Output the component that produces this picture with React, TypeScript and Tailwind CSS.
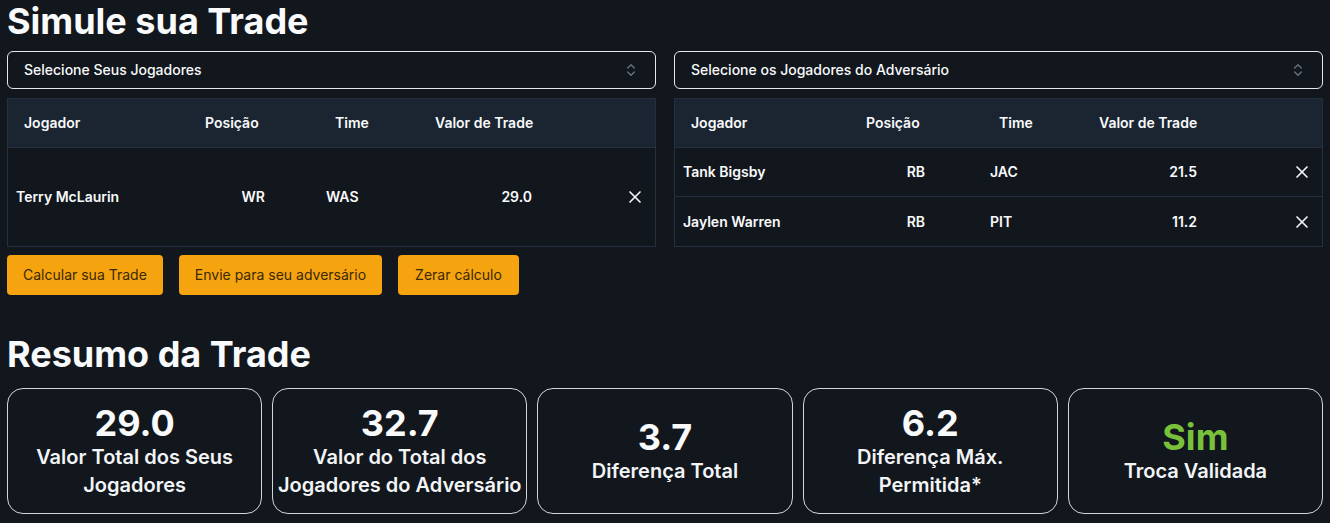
import { ChevronsUpDown, X } from "lucide-react";

type Player = {
  name: string;
  pos: string;
  team: string;
  value: string;
};

type TableCols = {
  grid: string;
  posHead: string;
  posBody: string;
  timeBody: string;
};

const myPlayers: Player[] = [
  { name: "Terry McLaurin", pos: "WR", team: "WAS", value: "29.0" },
];

const theirPlayers: Player[] = [
  { name: "Tank Bigsby", pos: "RB", team: "JAC", value: "21.5" },
  { name: "Jaylen Warren", pos: "RB", team: "PIT", value: "11.2" },
];

const leftCols: TableCols = {
  grid: "grid grid-cols-[181px_130px_100px_121px_1fr]",
  posHead: "pl-4",
  posBody: "pr-[54px] text-right",
  timeBody: "pl-[7px]",
};

const rightCols: TableCols = {
  grid: "grid grid-cols-[175px_133px_100px_122px_1fr]",
  posHead: "pl-4",
  posBody: "pr-[58px] text-right",
  timeBody: "pl-[7px]",
};

function SelectBox({ label }: { label: string }) {
  return (
    <div className="flex h-[38px] items-center justify-between rounded-md border border-gray-200 px-4 text-sm font-medium text-gray-50">
      <span>{label}</span>
      <ChevronsUpDown className="h-4 w-4 text-gray-500" strokeWidth={2} />
    </div>
  );
}

function PlayerTable({ players, cols }: { players: Player[]; cols: TableCols }) {
  return (
    <div className="flex h-full flex-col border border-[#243040] text-sm font-semibold text-gray-50">
      {/* header */}
      <div className={`${cols.grid} h-12 items-center bg-[#1b2532]`}>
        <div className="pl-4">Jogador</div>
        <div className={cols.posHead}>Posição</div>
        <div className="pl-4">Time</div>
        <div className="pl-4">Valor de Trade</div>
        <div />
      </div>

      {/* rows */}
      <div className="flex flex-1 flex-col divide-y divide-[#243040] border-t border-[#243040]">
        {players.map((p) => (
          <div key={p.name} className={`${cols.grid} min-h-[49px] flex-1 items-center`}>
            <div className="pl-2">{p.name}</div>
            <div className={cols.posBody}>{p.pos}</div>
            <div className={cols.timeBody}>{p.team}</div>
            <div className="pr-2 text-right">{p.value}</div>
            <div className="flex justify-end pr-[10px]">
              <X className="h-5 w-5 text-gray-100" strokeWidth={2} />
            </div>
          </div>
        ))}
      </div>
    </div>
  );
}

function SummaryCard({
  value,
  label,
  valueClass = "text-gray-50",
}: {
  value: string;
  label: React.ReactNode;
  valueClass?: string;
}) {
  return (
    <div className="flex h-[126px] flex-col items-center justify-center rounded-2xl border border-gray-300 text-center">
      <div className={`text-4xl font-bold leading-10 ${valueClass}`}>{value}</div>
      <div className="whitespace-nowrap text-xl font-semibold leading-7 text-gray-100">{label}</div>
    </div>
  );
}

export default function App() {
  return (
    <div className="min-h-[523px] bg-[#12171e] px-[7px] font-['Inter',sans-serif] text-gray-50">
      <h1 className="pt-[1px] text-4xl font-bold leading-10">Simule sua Trade</h1>

      <div className="mt-[10px] grid grid-cols-2 gap-x-[18px]">
        <SelectBox label="Selecione Seus Jogadores" />
        <SelectBox label="Selecione os Jogadores do Adversário" />
      </div>

      <div className="mt-[9px] grid grid-cols-2 items-stretch gap-x-[18px]">
        <PlayerTable players={myPlayers} cols={leftCols} />
        <PlayerTable players={theirPlayers} cols={rightCols} />
      </div>

      <div className="mt-[8px] flex gap-4">
        <button className="h-10 rounded bg-[#f5a30f] px-4 text-sm text-[#3b2905]">
          Calcular sua Trade
        </button>
        <button className="h-10 rounded bg-[#f5a30f] px-4 text-sm text-[#3b2905]">
          Envie para seu adversário
        </button>
        <button className="h-10 rounded bg-[#f5a30f] px-[17px] text-sm text-[#3b2905]">
          Zerar cálculo
        </button>
      </div>

      <h2 className="mt-[39px] text-4xl font-bold leading-10">Resumo da Trade</h2>

      <div className="mt-[14px] grid grid-cols-5 gap-[10px]">
        <SummaryCard
          value="29.0"
          label={
            <>
              Valor Total dos Seus
              <br />
              Jogadores
            </>
          }
        />
        <SummaryCard
          value="32.7"
          label={
            <>
              Valor do Total dos
              <br />
              Jogadores do Adversário
            </>
          }
        />
        <SummaryCard value="3.7" label="Diferença Total" />
        <SummaryCard
          value="6.2"
          label={
            <>
              Diferença Máx.
              <br />
              Permitida*
            </>
          }
        />
        <SummaryCard value="Sim" label="Troca Validada" valueClass="text-[#79c13a]" />
      </div>
    </div>
  );
}
